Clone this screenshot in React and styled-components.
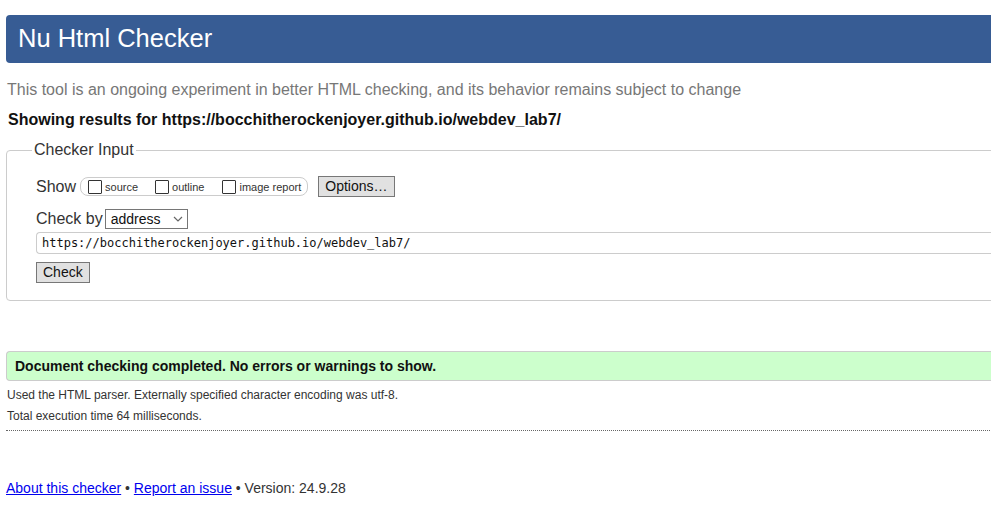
import React from "react";
import styled, { createGlobalStyle } from "styled-components";

const Global = createGlobalStyle`
  html, body { margin: 0; padding: 0; background: #fff; overflow: hidden; }
  body { font-family: "Liberation Sans", Arial, sans-serif; color: #222; }
`;

const Page = styled.div`
  width: 1120px;
  padding: 15px 0 0 6px;
`;

const Header = styled.h1`
  margin: 0;
  height: 48px;
  line-height: 47px;
  padding-left: 12px;
  background: #375c94;
  color: #fff;
  font-size: 25.5px;
  font-weight: normal;
  border-radius: 4px;
`;

const Intro = styled.p`
  margin: 18px 0 0 1px;
  font-size: 16px;
  line-height: 18px;
  color: #777;
`;

const Showing = styled.p`
  margin: 12px 0 0 2px;
  font-size: 16px;
  line-height: 18px;
  font-weight: bold;
  color: #111;
`;

const Fieldset = styled.fieldset`
  margin: 12px 0 0 0;
  padding: 17px 0 17px 29px;
  border: 1px solid #ccc;
  border-radius: 4px;
  min-width: 0;
`;

const Legend = styled.legend`
  margin-left: -4px;
  padding: 0 2px;
  font-size: 16px;
  color: #333;
`;

const Row = styled.div`
  display: flex;
  align-items: center;
  margin-top: ${(p) => p.$mt || 0}px;
`;

const Label = styled.span`
  font-size: 16px;
  color: #333;
`;

const Pill = styled.span`
  display: inline-flex;
  align-items: center;
  height: 17px;
  border: 1px solid #ccc;
  border-radius: 8px;
  padding: 0 6px 0 7px;
  margin-left: 4px;
`;

const CheckItem = styled.label`
  display: inline-flex;
  align-items: center;
  font-size: 11px;
  color: #333;
  margin-right: ${(p) => p.$mr || 0}px;
`;

const Box = styled.span`
  width: 12px;
  height: 12px;
  border: 1px solid #333;
  border-radius: 1px;
  margin-right: 3px;
  background: #fff;
`;

const Button = styled.button`
  font-family: "Liberation Sans", Arial, sans-serif;
  font-size: 14px;
  color: #111;
  background: #e1e1e1;
  border: 1px solid #777;
  border-radius: 0;
  height: 21px;
  padding: 0 ${(p) => p.$px || 6}px;
  margin-left: ${(p) => p.$ml || 0}px;
  line-height: 19px;
`;

const Select = styled.span`
  display: inline-flex;
  align-items: center;
  justify-content: space-between;
  box-sizing: border-box;
  width: 83px;
  height: 20px;
  border: 1px solid #767676;
  padding: 0 4px 0 5px;
  font-size: 14px;
  color: #111;
  margin-left: 2px;
`;

const UrlInput = styled.div`
  box-sizing: border-box;
  height: 22px;
  margin-top: 3px;
  border: 1px solid #ccc;
  border-right: none;
  border-radius: 4px 0 0 4px;
  padding-left: 5px;
  font-family: "DejaVu Sans Mono", "Liberation Mono", monospace;
  font-size: 12px;
  line-height: 20px;
  color: #111;
`;

const Success = styled.div`
  margin-top: 50px;
  height: 28px;
  line-height: 28px;
  background: #ccffcc;
  border: 1px solid #ccc;
  border-right: none;
  border-radius: 4px 0 0 4px;
  padding-left: 8px;
  font-size: 14px;
  font-weight: bold;
  color: #111;
`;

const Note = styled.p`
  margin: ${(p) => p.$mt || 0}px 0 0 1px;
  font-size: 12px;
  line-height: 14px;
  color: #333;
`;

const Divider = styled.hr`
  margin: 7px 0 0 0;
  border: none;
  border-top: 1px dotted #666;
`;

const Footer = styled.p`
  margin: 49px 0 0 0;
  font-size: 14px;
  line-height: 16px;
  color: #333;
`;

const Link = styled.a`
  color: #0000ee;
  text-decoration: underline;
`;

function Chevron() {
  return (
    <svg width="10" height="6" viewBox="0 0 10 6" aria-hidden="true">
      <path d="M1 1 L5 5 L9 1" fill="none" stroke="#666" strokeWidth="1.2" />
    </svg>
  );
}

export default function App() {
  return (
    <>
      <Global />
      <Page>
        <Header>Nu Html Checker</Header>
        <Intro>
          This tool is an ongoing experiment in better HTML checking, and its behavior remains subject to change
        </Intro>
        <Showing>Showing results for https://bocchitherockenjoyer.github.io/webdev_lab7/</Showing>
        <Fieldset>
          <Legend>Checker Input</Legend>
          <Row>
            <Label>Show</Label>
            <Pill>
              <CheckItem $mr={17}><Box />source</CheckItem>
              <CheckItem $mr={18}><Box />outline</CheckItem>
              <CheckItem><Box />image report</CheckItem>
            </Pill>
            <Button $ml={10} $px={6}>Options…</Button>
          </Row>
          <Row $mt={12}>
            <Label>Check by</Label>
            <Select>
              address
              <Chevron />
            </Select>
          </Row>
          <UrlInput>https://bocchitherockenjoyer.github.io/webdev_lab7/</UrlInput>
          <Row $mt={8}>
            <Button $px={6}>Check</Button>
          </Row>
        </Fieldset>
        <Success>Document checking completed. No errors or warnings to show.</Success>
        <Note $mt={7}>Used the HTML parser. Externally specified character encoding was utf-8.</Note>
        <Note $mt={7}>Total execution time 64 milliseconds.</Note>
        <Divider />
        <Footer>
          <Link href="#">About this checker</Link> • <Link href="#">Report an issue</Link> • Version: 24.9.28
        </Footer>
      </Page>
    </>
  );
}
